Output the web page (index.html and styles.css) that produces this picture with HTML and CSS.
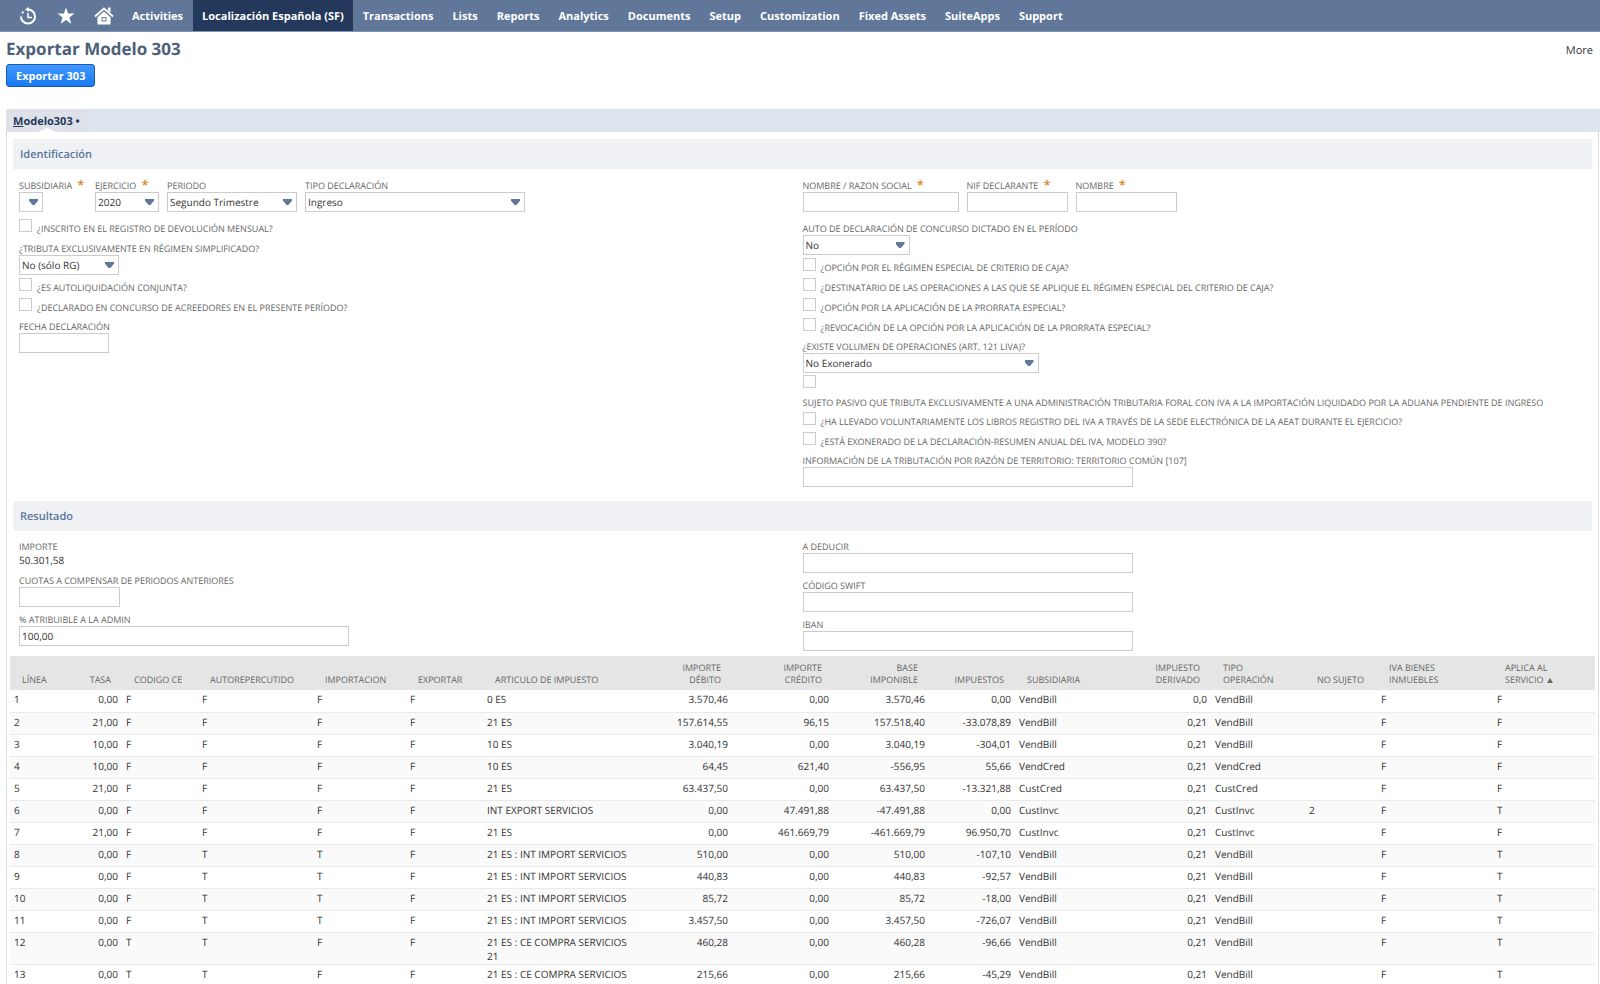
FILE: index.html
```html
<!DOCTYPE html>
<html lang="es">
<head>
<meta charset="utf-8">
<title>Exportar Modelo 303</title>
<link rel="stylesheet" href="styles.css">
</head>
<body>
<nav class="nav">
  <a class="nav-icon" href="#" aria-label="Recent records"><svg width="18" height="18" viewBox="0 0 18 18" fill="none" stroke="currentColor" stroke-width="2"><path d="M2 9.500A7 7 0 1 0 9 2.500"/><path d="M9 6v4.500h4" stroke-width="1.500"/><path d="M10 0v5L6 2.500z" fill="currentColor" stroke="none"/><path d="M3 6.500l1.500-2" stroke-width="1.500"/></svg></a>
  <a class="nav-icon" href="#" aria-label="Shortcuts"><svg width="18" height="18" viewBox="0 0 18 18" fill="currentColor"><path d="M9 .5l2.100 6H17.500l-5.100 3.900 1.900 6.300L9 13l-5.300 3.700 1.900-6.300L.5 6.500h6.400z"/></svg></a>
  <a class="nav-icon" href="#" aria-label="Home"><svg width="20" height="18" viewBox="0 0 20 18" fill="currentColor"><path d="M1 9.500L10 1.500l9 8" fill="none" stroke="currentColor" stroke-width="1.800"/><path d="M14 .5h2.500v5L14 3.500z"/><path fill-rule="evenodd" d="M10 4.500l6.500 5.800V17.500h-13V10.300zM7.500 10v4.500h5V10z"/><path d="M8.500 11h3v2.500h-3z"/></svg></a>
  <a href="#">Activities</a>
  <a class="current" href="#" aria-current="page">Localización Española (SF)</a>
  <a href="#">Transactions</a>
  <a href="#">Lists</a>
  <a href="#">Reports</a>
  <a href="#">Analytics</a>
  <a href="#">Documents</a>
  <a href="#">Setup</a>
  <a href="#">Customization</a>
  <a href="#">Fixed Assets</a>
  <a href="#">SuiteApps</a>
  <a href="#">Support</a>
</nav>
<header class="page-head">
  <h1>Exportar Modelo 303</h1>
  <a class="more" href="#">More</a>
</header>
<div class="actions"><button class="primary" type="button">Exportar 303</button></div>
<div class="tabs"><a class="tab" href="#"><u>M</u>odelo303 •</a></div>
<main class="panel">
  <form>
  <h2>Identificación</h2>
  <div class="columns ident">
    <div class="column">
      <div class="row">
        <div class="field narrow"><label for="sub">SUBSIDIARIA <b>*</b></label><span class="select w24"><select id="sub"><option></option></select></span></div>
        <div class="field"><label for="eje">EJERCICIO <b>*</b></label><span class="select w64"><select id="eje"><option>2020</option></select></span></div>
        <div class="field"><label for="per">PERIODO</label><span class="select w130"><select id="per"><option>Segundo Trimestre</option></select></span></div>
        <div class="field"><label for="tipo">TIPO DECLARACIÓN</label><span class="select w220"><select id="tipo"><option>Ingreso</option></select></span></div>
      </div>
      <div class="check spaced"><input type="checkbox" id="c1"><label for="c1">¿INSCRITO EN EL REGISTRO DE DEVOLUCIÓN MENSUAL?</label></div>
      <div class="field"><label for="simp">¿TRIBUTA EXCLUSIVAMENTE EN RÉGIMEN SIMPLIFICADO?</label><span class="select w100"><select id="simp"><option>No (sólo RG)</option></select></span></div>
      <div class="check"><input type="checkbox" id="c2"><label for="c2">¿ES AUTOLIQUIDACIÓN CONJUNTA?</label></div>
      <div class="check"><input type="checkbox" id="c3"><label for="c3">¿DECLARADO EN CONCURSO DE ACREEDORES EN EL PRESENTE PERÍODO?</label></div>
      <div class="field"><label for="fecha">FECHA DECLARACIÓN</label><input class="w90" type="text" id="fecha"></div>
    </div>
    <div class="column">
      <div class="row">
        <div class="field"><label for="razon">NOMBRE / RAZON SOCIAL <b>*</b></label><input class="w156" type="text" id="razon"></div>
        <div class="field"><label for="nif">NIF DECLARANTE <b>*</b></label><input class="w101" type="text" id="nif"></div>
        <div class="field"><label for="nom">NOMBRE <b>*</b></label><input class="w101" type="text" id="nom"></div>
      </div>
      <div class="field spaced"><label for="auto">AUTO DE DECLARACIÓN DE CONCURSO DICTADO EN EL PERÍODO</label><span class="select w107"><select id="auto"><option>No</option></select></span></div>
      <div class="check"><input type="checkbox" id="c4"><label for="c4">¿OPCIÓN POR EL RÉGIMEN ESPECIAL DE CRITERIO DE CAJA?</label></div>
      <div class="check"><input type="checkbox" id="c5"><label for="c5">¿DESTINATARIO DE LAS OPERACIONES A LAS QUE SE APLIQUE EL RÉGIMEN ESPECIAL DEL CRITERIO DE CAJA?</label></div>
      <div class="check"><input type="checkbox" id="c6"><label for="c6">¿OPCIÓN POR LA APLICACIÓN DE LA PRORRATA ESPECIAL?</label></div>
      <div class="check"><input type="checkbox" id="c7"><label for="c7">¿REVOCACIÓN DE LA OPCIÓN POR LA APLICACIÓN DE LA PRORRATA ESPECIAL?</label></div>
      <div class="field"><label for="vol">¿EXISTE VOLUMEN DE OPERACIONES (ART. 121 LIVA)?</label><span class="select w236"><select id="vol"><option>No Exonerado</option></select></span></div>
      <div class="check stacked"><input type="checkbox" id="c8"><label for="c8">SUJETO PASIVO QUE TRIBUTA EXCLUSIVAMENTE A UNA ADMINISTRACIÓN TRIBUTARIA FORAL CON IVA A LA IMPORTACIÓN LIQUIDADO POR LA ADUANA PENDIENTE DE INGRESO</label></div>
      <div class="check"><input type="checkbox" id="c9"><label for="c9">¿HA LLEVADO VOLUNTARIAMENTE LOS LIBROS REGISTRO DEL IVA A TRAVÉS DE LA SEDE ELECTRÓNICA DE LA AEAT DURANTE EL EJERCICIO?</label></div>
      <div class="check"><input type="checkbox" id="c10"><label for="c10">¿ESTÁ EXONERADO DE LA DECLARACIÓN-RESUMEN ANUAL DEL IVA, MODELO 390?</label></div>
      <div class="field"><label for="info">INFORMACIÓN DE LA TRIBUTACIÓN POR RAZÓN DE TERRITORIO: TERRITORIO COMÚN [107]</label><input class="w330" type="text" id="info"></div>
    </div>
  </div>
  <h2>Resultado</h2>
  <div class="columns result">
    <div class="column">
      <div class="field"><span class="label">IMPORTE</span><span class="value">50.301,58</span></div>
      <div class="field"><label for="cuotas">CUOTAS A COMPENSAR DE PERIODOS ANTERIORES</label><input class="w101" type="text" id="cuotas"></div>
      <div class="field"><label for="pct">% ATRIBUIBLE A LA ADMIN</label><input class="w330" type="text" id="pct" value="100,00"></div>
    </div>
    <div class="column">
      <div class="field"><label for="ded">A DEDUCIR</label><input class="w330" type="text" id="ded"></div>
      <div class="field"><label for="swift">CÓDIGO SWIFT</label><input class="w330" type="text" id="swift"></div>
      <div class="field"><label for="iban">IBAN</label><input class="w330" type="text" id="iban"></div>
    </div>
  </div>
  </form>
  <table>
    <colgroup><col class="c-linea"><col class="c-tasa"><col class="c-ce"><col class="c-auto"><col class="c-imp"><col class="c-exp"><col class="c-art"><col class="c-deb"><col class="c-cred"><col class="c-base"><col class="c-tax"><col class="c-sub"><col class="c-der"><col class="c-tipo"><col class="c-nos"><col class="c-iva"><col class="c-apl"></colgroup>
    <thead><tr><th>LÍNEA</th><th class="n">TASA</th><th>CODIGO CE</th><th>AUTOREPERCUTIDO</th><th>IMPORTACION</th><th>EXPORTAR</th><th>ARTICULO DE IMPUESTO</th><th class="n">IMPORTE<br>DÉBITO</th><th class="n">IMPORTE<br>CRÉDITO</th><th class="n">BASE<br>IMPONIBLE</th><th class="n">IMPUESTOS</th><th>SUBSIDIARIA</th><th class="n">IMPUESTO<br>DERIVADO</th><th>TIPO<br>OPERACIÓN</th><th>NO SUJETO</th><th>IVA BIENES<br>INMUEBLES</th><th>APLICA AL<br>SERVICIO<span class="sort"></span></th></tr></thead>
    <tbody>
      <tr><td>1</td><td class="n">0,00</td><td>F</td><td>F</td><td>F</td><td>F</td><td>0 ES</td><td class="n">3.570,46</td><td class="n">0,00</td><td class="n">3.570,46</td><td class="n">0,00</td><td>VendBill</td><td class="n">0,0</td><td>VendBill</td><td></td><td>F</td><td>F</td></tr>
      <tr><td>2</td><td class="n">21,00</td><td>F</td><td>F</td><td>F</td><td>F</td><td>21 ES</td><td class="n">157.614,55</td><td class="n">96,15</td><td class="n">157.518,40</td><td class="n">-33.078,89</td><td>VendBill</td><td class="n">0,21</td><td>VendBill</td><td></td><td>F</td><td>F</td></tr>
      <tr><td>3</td><td class="n">10,00</td><td>F</td><td>F</td><td>F</td><td>F</td><td>10 ES</td><td class="n">3.040,19</td><td class="n">0,00</td><td class="n">3.040,19</td><td class="n">-304,01</td><td>VendBill</td><td class="n">0,21</td><td>VendBill</td><td></td><td>F</td><td>F</td></tr>
      <tr><td>4</td><td class="n">10,00</td><td>F</td><td>F</td><td>F</td><td>F</td><td>10 ES</td><td class="n">64,45</td><td class="n">621,40</td><td class="n">-556,95</td><td class="n">55,66</td><td>VendCred</td><td class="n">0,21</td><td>VendCred</td><td></td><td>F</td><td>F</td></tr>
      <tr><td>5</td><td class="n">21,00</td><td>F</td><td>F</td><td>F</td><td>F</td><td>21 ES</td><td class="n">63.437,50</td><td class="n">0,00</td><td class="n">63.437,50</td><td class="n">-13.321,88</td><td>CustCred</td><td class="n">0,21</td><td>CustCred</td><td></td><td>F</td><td>F</td></tr>
      <tr><td>6</td><td class="n">0,00</td><td>F</td><td>F</td><td>F</td><td>F</td><td>INT EXPORT SERVICIOS</td><td class="n">0,00</td><td class="n">47.491,88</td><td class="n">-47.491,88</td><td class="n">0,00</td><td>CustInvc</td><td class="n">0,21</td><td>CustInvc</td><td>2</td><td>F</td><td>T</td></tr>
      <tr><td>7</td><td class="n">21,00</td><td>F</td><td>F</td><td>F</td><td>F</td><td>21 ES</td><td class="n">0,00</td><td class="n">461.669,79</td><td class="n">-461.669,79</td><td class="n">96.950,70</td><td>CustInvc</td><td class="n">0,21</td><td>CustInvc</td><td></td><td>F</td><td>F</td></tr>
      <tr><td>8</td><td class="n">0,00</td><td>F</td><td>T</td><td>T</td><td>F</td><td>21 ES : INT IMPORT SERVICIOS</td><td class="n">510,00</td><td class="n">0,00</td><td class="n">510,00</td><td class="n">-107,10</td><td>VendBill</td><td class="n">0,21</td><td>VendBill</td><td></td><td>F</td><td>T</td></tr>
      <tr><td>9</td><td class="n">0,00</td><td>F</td><td>T</td><td>T</td><td>F</td><td>21 ES : INT IMPORT SERVICIOS</td><td class="n">440,83</td><td class="n">0,00</td><td class="n">440,83</td><td class="n">-92,57</td><td>VendBill</td><td class="n">0,21</td><td>VendBill</td><td></td><td>F</td><td>T</td></tr>
      <tr><td>10</td><td class="n">0,00</td><td>F</td><td>T</td><td>T</td><td>F</td><td>21 ES : INT IMPORT SERVICIOS</td><td class="n">85,72</td><td class="n">0,00</td><td class="n">85,72</td><td class="n">-18,00</td><td>VendBill</td><td class="n">0,21</td><td>VendBill</td><td></td><td>F</td><td>T</td></tr>
      <tr><td>11</td><td class="n">0,00</td><td>F</td><td>T</td><td>T</td><td>F</td><td>21 ES : INT IMPORT SERVICIOS</td><td class="n">3.457,50</td><td class="n">0,00</td><td class="n">3.457,50</td><td class="n">-726,07</td><td>VendBill</td><td class="n">0,21</td><td>VendBill</td><td></td><td>F</td><td>T</td></tr>
      <tr><td>12</td><td class="n">0,00</td><td>T</td><td>T</td><td>F</td><td>F</td><td>21 ES : CE COMPRA SERVICIOS 21</td><td class="n">460,28</td><td class="n">0,00</td><td class="n">460,28</td><td class="n">-96,66</td><td>VendBill</td><td class="n">0,21</td><td>VendBill</td><td></td><td>F</td><td>T</td></tr>
      <tr><td>13</td><td class="n">0,00</td><td>T</td><td>T</td><td>F</td><td>F</td><td>21 ES : CE COMPRA SERVICIOS</td><td class="n">215,66</td><td class="n">0,00</td><td class="n">215,66</td><td class="n">-45,29</td><td>VendBill</td><td class="n">0,21</td><td>VendBill</td><td></td><td>F</td><td>T</td></tr>
    </tbody>
  </table>
</main>
</body>
</html>
```
FILE: styles.css
```css
* { box-sizing: border-box; }
html { overflow: hidden; }
body {
  margin: 0;
  background: #fff;
  color: #333;
  font: 10px/14px "Open Sans", "Noto Sans", sans-serif;
  text-rendering: geometricPrecision;
}
a { color: inherit; text-decoration: none; }

.nav {
  display: flex;
  gap: 1px;
  height: 32px;
  padding-left: 9px;
  background: #607799;
  border-bottom: 1px solid #7f95b5;
  color: #fff;
  font-size: 11px;
  font-weight: 700;
}
.nav a { display: flex; align-items: center; padding: 2px 9px 0; white-space: nowrap; }
.nav .nav-icon { width: 37px; padding: 1px 0 0; justify-content: center; }
.nav .current { background: #24385b; }

.page-head {
  display: flex;
  justify-content: space-between;
  align-items: center;
  height: 32px;
  padding: 2px 7px 0 6px;
}
h1 { margin: 0; color: #4d5f79; font-size: 17px; line-height: 24px; font-weight: 700; }
.more { padding-top: 3px; font-size: 11px; line-height: 16px; }
.actions { padding: 0 6px 22px; }
.primary {
  display: block;
  height: 23px;
  padding: 0 9px;
  border: 1px solid #125ab2;
  border-radius: 3px;
  background: linear-gradient(#4297ff, #197bf0);
  color: #fff;
  font: 700 11px/16px "Open Sans", sans-serif;
}

.tabs { display: flex; margin-left: 6px; background: #dee4ee; }
.tab {
  position: relative;
  height: 23px;
  padding: 5px 9px 2px 7px;
  background: #dfe1e8;
  color: #24385b;
  font-size: 11px;
  line-height: 16px;
  font-weight: 700;
}
.tab::after {
  content: "";
  position: absolute;
  left: calc(50% - 9px);
  bottom: 0;
  border: solid transparent;
  border-width: 0 9px 4px;
  border-bottom-color: #fff;
}
.panel {
  margin: 0 1px 0 6px;
  padding-top: 7px;
  border: solid #dcdcdf;
  border-width: 0 1px;
}
h2 {
  margin: 0 6px;
  padding: 8px 7px 6px;
  background: #eff1f5;
  color: #5a7698;
  font-size: 11px;
  line-height: 16px;
  font-weight: 600;
}

.columns { display: grid; grid-template-columns: 1fr 1fr; margin: 0 6px; }
.column { min-width: 0; padding-left: 6px; }
.column + .column { padding-left: 0; }
.ident { padding: 9px 0 14px; }
.result { padding: 6px 0 5px; }
.row { display: flex; gap: 8px; }
.narrow { min-width: 68px; }
.field { padding-top: 2px; }
.check + .field { padding-top: 4px; }
.field + .field { padding-top: 5px; }
.row .field, .row .field + .field { padding-top: 0; }
.field > label, .field > .label { display: block; height: 14px; }
label, .label { color: #666; font-size: 9px; line-height: 16px; white-space: nowrap; }
label b { margin-left: 3px; color: #d9902f; font-size: 12px; line-height: 10px; }
.value { display: block; height: 15px; }
input[type=text], select {
  display: block;
  width: 100%;
  height: 20px;
  margin: 0;
  padding: 0 2px;
  border: 1px solid #ccc;
  border-radius: 0;
  background: #fff;
  color: #333;
  font: 10px/16px "Open Sans", sans-serif;
  text-rendering: inherit;
  appearance: none;
}
.select { position: relative; display: block; }
.select::after {
  content: "";
  position: absolute;
  right: 5px;
  top: 7px;
  width: 9px;
  height: 6px;
  background: #607799;
  clip-path: polygon(0 0, 100% 0, 100% 30%, 60% 100%, 40% 100%, 0 30%);
}
.check { display: flex; gap: 5px; height: 20px; padding-top: 3px; }
.check label { padding-top: 2px; }
.check input {
  flex: none;
  width: 13px;
  height: 13px;
  margin: 0;
  border: 1px solid #ccc;
  background: #fff;
  appearance: none;
}
.check.spaced { height: 25px; padding-top: 7px; }
.field.spaced { padding-top: 9px; }
.check.stacked { flex-direction: column; height: 36px; padding-top: 2px; }

input.w90 { width: 90px; }
input.w101 { width: 101px; }
input.w156 { width: 156px; }
input.w330 { width: 330px; }
.w24 { width: 24px; }
.w64 { width: 64px; }
.w100 { width: 100px; }
.w107 { width: 107px; }
.w130 { width: 130px; }
.w220 { width: 220px; }
.w236 { width: 236px; }

table {
  width: calc(100% - 6px);
  margin-left: 3px;
  border-collapse: collapse;
  table-layout: fixed;
}
th {
  height: 34px;
  padding: 4px 12px;
  background: #e5e5e5;
  color: #666;
  font-size: 9px;
  line-height: 12px;
  font-weight: 400;
  text-align: left;
  vertical-align: bottom;
  white-space: nowrap;
}
td {
  height: 22px;
  padding: 2px 4px 1px;
  border-bottom: 1px solid #eaeaea;
  vertical-align: top;
}
tbody tr:nth-child(even) { background: #fafafa; }
.n { text-align: right; }
th.n { padding-right: 11px; }
.sort {
  display: inline-block;
  margin-left: 3px;
  border: solid transparent;
  border-width: 0 3px 5px;
  border-bottom-color: #666;
}
.c-linea { width: 60px; }
.c-tasa { width: 52px; }
.c-ce { width: 76px; }
.c-auto { width: 115px; }
.c-imp { width: 93px; }
.c-exp { width: 77px; }
.c-art { width: 152px; }
.c-deb { width: 97px; }
.c-cred { width: 101px; }
.c-base { width: 96px; }
.c-tax { width: 86px; }
.c-sub { width: 110px; }
.c-der { width: 86px; }
.c-tipo { width: 94px; }
.c-nos { width: 72px; }
.c-iva { width: 116px; }
.c-apl { width: 102px; }
```
